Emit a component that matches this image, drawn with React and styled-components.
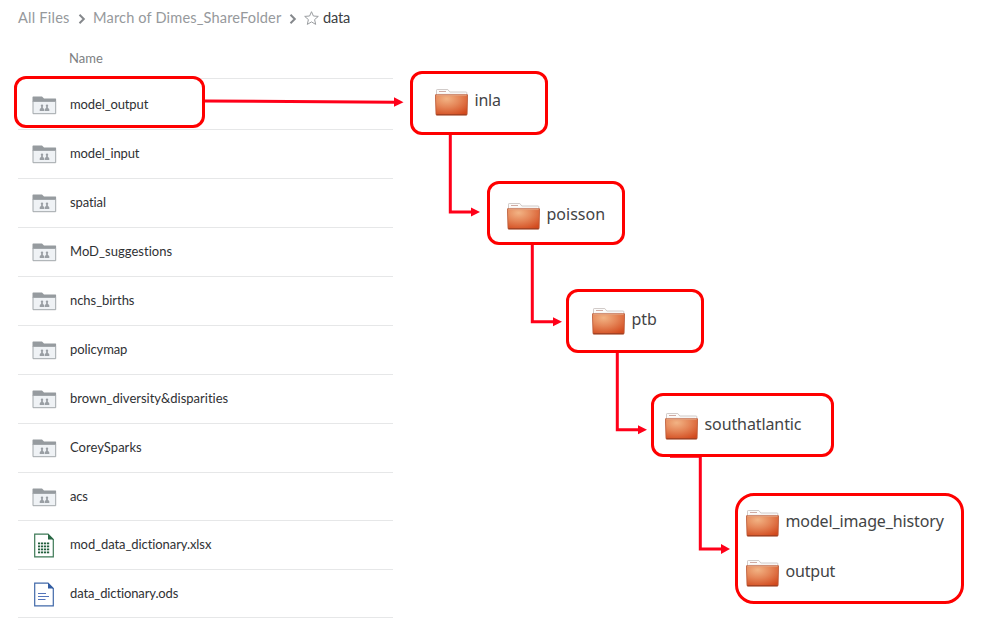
import React from "react";
import styled, { createGlobalStyle } from "styled-components";

const GlobalStyle = createGlobalStyle`
  * { box-sizing: border-box; }
  body { margin: 0; background: #fff; }
`;

const Page = styled.main`
  position: relative;
  width: 988px;
  height: 627px;
  overflow: hidden;
  background: #fff;
  font-family: Lato, sans-serif;
  font-variant-ligatures: none;
`;

const Breadcrumb = styled.nav`
  display: flex;
  align-items: center;
  height: 36px;
  padding-left: 18px;
  font-size: 14.6px;
  color: #96999c;
  white-space: nowrap;
`;

const Crumb = styled.span`
  width: ${(p) => p.$width}px;
  letter-spacing: ${(p) => p.$spacing || 0}px;
  color: ${(p) => (p.$current ? "#3b3e42" : "inherit")};
  line-height: 20px;
`;

const Chevron = styled.svg`
  width: 8px;
  height: 12px;
  margin: 2px ${(p) => p.$after}px 0 8px;
  flex: none;
`;

const Star = styled.svg`
  width: 15px;
  height: 14px;
  margin: 0 4px 0 0;
  flex: none;
`;

const FileTable = styled.section`
  width: 375px;
  margin-left: 18px;
`;

const TableHead = styled.header`
  height: 43px;
  padding: 13px 0 0 51px;
  border-bottom: 1px solid #e6e7e8;
  font-size: 13px;
  line-height: 18px;
  letter-spacing: 0;
  color: #7d8082;
`;

const FileRow = styled.div`
  display: flex;
  align-items: center;
  height: ${(p) => p.$height}px;
  padding: ${(p) => (p.$first ? 2 : 0)}px 0 0 14px;
  border-bottom: 1px solid #e6e7e8;
`;

const IconSlot = styled.span`
  display: flex;
  width: 38px;
  padding-top: 1px;
  padding-left: ${(p) => (p.$doc ? 2 : 0)}px;
`;

const FileName = styled.span`
  margin-top: -2px;
  font-size: 13px;
  line-height: 18px;
  letter-spacing: ${(p) => p.$spacing}px;
  color: #2f3134;
  white-space: nowrap;
`;

const Outline = styled.div`
  position: absolute;
  left: ${(p) => p.$x}px;
  top: ${(p) => p.$y}px;
  width: ${(p) => p.$w}px;
  height: ${(p) => p.$h}px;
  border: 3px solid #fe0000;
  border-radius: ${(p) => p.$radius || 12}px;
`;

const Node = styled(Outline)`
  display: flex;
  flex-direction: column;
  gap: 23px;
  padding: ${(p) => p.$padTop}px 0 0 ${(p) => p.$padLeft}px;
`;

const FolderLine = styled.div`
  display: flex;
  align-items: flex-start;
  gap: 6.5px;
  height: 27px;
`;

const FolderName = styled.span`
  font: 16px/22px "Noto Sans", sans-serif;
  letter-spacing: ${(p) => p.$spacing}px;
  color: #434445;
  white-space: nowrap;
`;

const Connectors = styled.svg`
  position: absolute;
  inset: 0;
  pointer-events: none;
`;

function SharedFolderIcon() {
  return (
    <svg width="25" height="19" viewBox="0 0 25 19">
      <path d="M.5 1.2Q.5.5 1.2.5H10l2 2h11.6q.5 0 .5.6V6H.5z" fill="#969b9f" />
      <path d="M1 5.5h22.7v12.2H1z" fill="#eff2f5" stroke="#a2a7ab" />
      <g fill="#9a9fa4">
        <circle cx="10" cy="9.7" r="1.2" />
        <circle cx="15" cy="9.7" r="1.2" />
        <path d="M7.7 15v-1.4q0-1 1.3-1.5l.4-1.5h1.2l.4 1.5q1.2.5 1.2 1.5V15zM12.8 15v-1.4q0-1 1.2-1.5l.4-1.5h1.2l.4 1.5q1.3.5 1.3 1.5V15z" />
      </g>
    </svg>
  );
}

function SheetIcon() {
  return (
    <svg width="20" height="25" viewBox="0 0 20 25">
      <path d="M.7 1.2H14l5.3 5.3v17.3H.7z" fill="#fff" stroke="#3d7956" strokeWidth="1.2" />
      <path d="M14 .7v5.8h5.8z" fill="#286744" />
      <g fill="#225f3d">
        {[9.5, 12.5, 15.5, 18.5].map((y) =>
          [4, 7, 10, 13].map((x) => <rect key={`${x}-${y}`} x={x} y={y} width="2.2" height="1.8" />)
        )}
      </g>
    </svg>
  );
}

function DocumentIcon() {
  return (
    <svg width="20" height="25" viewBox="0 0 20 25">
      <path d="M.7 1.2H14l5.3 5.3v17.3H.7z" fill="#fff" stroke="#4169a9" strokeWidth="1.2" />
      <path d="M14 .7v5.8h5.8z" fill="#325ca2" />
      <path d="M4 11.5h8M4 14.5h11M4 17.5h7.5" stroke="#5475bb" strokeWidth="1.2" />
    </svg>
  );
}

function OrangeFolder() {
  return (
    <svg width="33" height="27" viewBox="0 0 33 27">
      <defs>
        <radialGradient id="folderFront" cx="35%" cy="20%" r="90%">
          <stop offset="0" stopColor="#f2b384" />
          <stop offset=".45" stopColor="#e58658" />
          <stop offset="1" stopColor="#d2491d" />
        </radialGradient>
      </defs>
      <path d="M1.5 8V1.2q0-.7.7-.7h10.6l2 2.5h16.3q.7 0 .7.7V8z" fill="#fcfbfa" stroke="#c5bebb" strokeWidth=".8" />
      <path d="M4 2.5h7" stroke="#c9a198" strokeWidth=".9" />
      <path d="M3 5.1h27" stroke="#e6e3e1" strokeWidth=".7" />
      <path d="M.4 5.8h32.2l-.5 19.4q0 .8-.8.8H1.8q-.8 0-.8-.8z" fill="url(#folderFront)" stroke="#b95734" strokeWidth=".8" />
      <path d="M1.3 6.6h30.4" stroke="#e8ad89" strokeWidth=".7" />
      <path d="M1.3 25.8h30.4" stroke="#953c22" strokeWidth="1" />
    </svg>
  );
}

function BreadcrumbChevron({ after }) {
  return (
    <Chevron $after={after} viewBox="0 0 8 12">
      <path d="M1.5 1.8 5.8 6 1.5 10.2" fill="none" stroke="#85888c" strokeWidth="2" />
    </Chevron>
  );
}

const files = [
  { name: "model_output", spacing: -0.13, height: 51 },
  { name: "model_input", spacing: -0.14 },
  { name: "spatial", spacing: -0.1 },
  { name: "MoD_suggestions", spacing: 0.03 },
  { name: "nchs_births", spacing: -0.05 },
  { name: "policymap", spacing: -0.1 },
  { name: "brown_diversity&disparities" },
  { name: "CoreySparks", spacing: 0.03 },
  { name: "acs", spacing: -0.2, height: 48 },
  { name: "mod_data_dictionary.xlsx", spacing: -0.08 },
  { name: "data_dictionary.ods", spacing: -0.12, height: 48 },
];

const documentIcons = {
  xlsx: SheetIcon,
  ods: DocumentIcon,
};

const nodes = [
  { x: 410, y: 71, w: 138, h: 64, padLeft: 22, padTop: 15, folders: [{ name: "inla", spacing: -0.2 }] },
  { x: 487, y: 181, w: 138, h: 64, padLeft: 17, padTop: 19, folders: [{ name: "poisson", spacing: 0 }] },
  { x: 566, y: 289, w: 138, h: 64, padLeft: 23, padTop: 16, folders: [{ name: "ptb", spacing: 0 }] },
  { x: 651, y: 393, w: 183, h: 64, padLeft: 11, padTop: 17, folders: [{ name: "southatlantic", spacing: -0.1 }] },
  {
    x: 735, y: 493, w: 229, h: 111, radius: 19, padLeft: 8, padTop: 14,
    folders: [{ name: "model_image_history", spacing: -0.13 }, { name: "output", spacing: -0.2 }],
  },
];

export default function App() {
  return (
    <Page>
      <GlobalStyle />
      <Breadcrumb>
        <Crumb $width={52} $spacing={0.22}>All Files</Crumb>
        <BreadcrumbChevron after={7} />
        <Crumb $width={188} $spacing={0.15}>March of Dimes_ShareFolder</Crumb>
        <BreadcrumbChevron after={7} />
        <Star viewBox="0 0 15 14">
          <path d="m7.5.7 1.9 4.3 4.9.4-3.7 3.2 1.1 4.8-4.2-2.5-4.2 2.5 1.1-4.8L.7 5.4 5.6 5z" fill="none" stroke="#9a9da0" />
        </Star>
        <Crumb $width={30} $spacing={-0.2} $current>data</Crumb>
      </Breadcrumb>
      <FileTable>
        <TableHead>Name</TableHead>
        {files.map(({ name, spacing = 0, height = 49 }, i) => {
          const Icon = documentIcons[name.split(".")[1]] || SharedFolderIcon;
          return (
            <FileRow key={name} $first={i === 0} $height={height}>
              <IconSlot $doc={Icon !== SharedFolderIcon}>
                <Icon />
              </IconSlot>
              <FileName $spacing={spacing}>{name}</FileName>
            </FileRow>
          );
        })}
      </FileTable>
      <Connectors width="988" height="627" viewBox="0 0 988 627">
        <g fill="none" stroke="#ff0019" strokeWidth="3">
          <path d="M205 101 395 102.3" />
          <path d="M450.3 134v78H472" />
          <path d="M532.3 244v77.8H554" />
          <path d="M617.3 352v77.8H639" />
          <path d="M700.3 456v93H722" />
        </g>
        <path d="M670 457.3h31" stroke="#ff0019" />
        <g fill="#ff0019">
          <path d="m394 97.3 9.5 5-9.5 4.5z" />
          <path d="m471 207.5 9 4.5-9 4.5z" />
          <path d="m553 317.3 9 4.5-9 4.5z" />
          <path d="m638 425.3 9 4.5-9 4.5z" />
          <path d="m721 544 9 5-9 5z" />
        </g>
      </Connectors>
      <Outline $x={14} $y={76} $w={191} $h={52} />
      {nodes.map((n) => (
        <Node key={n.x} $x={n.x} $y={n.y} $w={n.w} $h={n.h} $radius={n.radius} $padLeft={n.padLeft} $padTop={n.padTop}>
          {n.folders.map((f) => (
            <FolderLine key={f.name}>
              <OrangeFolder />
              <FolderName $spacing={f.spacing}>{f.name}</FolderName>
            </FolderLine>
          ))}
        </Node>
      ))}
    </Page>
  );
}
